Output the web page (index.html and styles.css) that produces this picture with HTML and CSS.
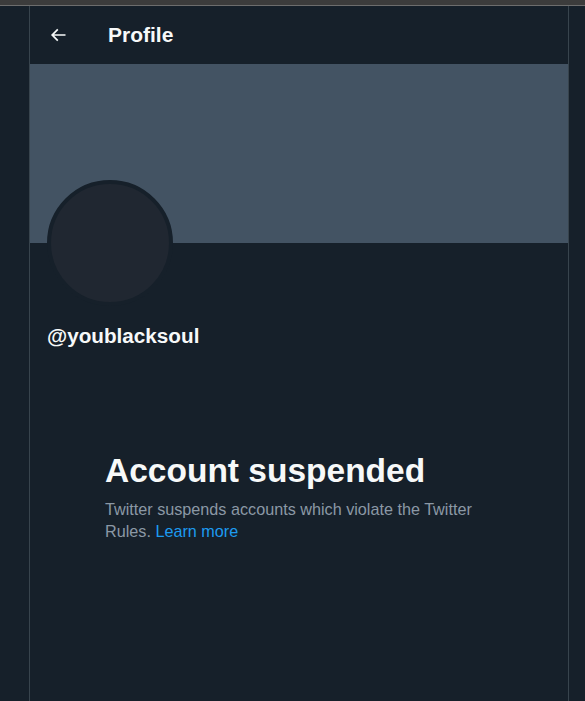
FILE: index.html
```html
<!DOCTYPE html>
<html>
<head>
<meta charset="utf-8">
<link rel="stylesheet" href="styles.css">
</head>
<body>
<div class="topbar"></div>
<div class="layout">
  <div class="side"></div>
  <main class="main">
    <header class="header">
      <svg class="back" width="20" height="20" viewBox="0 0 24 24"><path d="M7.414 13l5.043 5.04-1.414 1.42L3.586 12l7.457-7.46 1.414 1.42L7.414 11H21v2H7.414z" fill="#f7f9f9"/></svg>
      <h1 class="title">Profile</h1>
    </header>
    <div class="banner"></div>
    <div class="avatar"></div>
    <div class="handle">@youblacksoul</div>
    <section class="notice">
      <h2 class="notice-title">Account suspended</h2>
      <p class="notice-text">Twitter suspends accounts which violate the Twitter Rules. <a class="link" href="#">Learn more</a></p>
    </section>
  </main>
  <div class="side side-right"></div>
</div>
</body>
</html>
```
FILE: styles.css
```css
html, body {
  margin: 0;
  padding: 0;
  background: #16202a;
  height: 100%;
  overflow: hidden;
  font-family: "Liberation Sans", Arial, sans-serif;
}
.topbar {
  height: 5px;
  background: #3c3c3c;
  border-bottom: 1px solid #6d6d6d;
}
.layout {
  display: flex;
  height: 695px;
}
.side {
  width: 29px;
  flex: none;
}
.side-right {
  flex: 1;
}
.main {
  width: 538px;
  flex: none;
  border-left: 1px solid #38444d;
  border-right: 1px solid #38444d;
  display: flex;
  flex-direction: column;
}
.header {
  height: 58px;
  display: flex;
  align-items: center;
  padding-left: 18px;
}
.back {
  display: block;
  margin-top: -1px;
}
.title {
  margin: 0 0 0 40px;
  font-size: 21px;
  font-weight: 700;
  color: #f7f9f9;
}
.banner {
  height: 179px;
  background: #435363;
}
.avatar {
  width: 118px;
  height: 118px;
  border: 4px solid #16202a;
  border-radius: 50%;
  background: #202731;
  margin: -63px 0 0 17px;
}
.handle {
  margin: 18px 0 0 17px;
  font-size: 20.7px;
  line-height: 24px;
  font-weight: 700;
  color: #f7f9f9;
}
.notice {
  margin: 103px 0 0 75px;
  width: 392px;
}
.notice-title {
  margin: 0;
  font-size: 33.5px;
  font-weight: 700;
  color: #f7f9f9;
  line-height: 40px;
}
.notice-text {
  margin: 7px 0 0;
  font-size: 16.2px;
  line-height: 22px;
  color: #8b98a5;
}
.link {
  color: #1d9bf0;
  text-decoration: none;
}
```
